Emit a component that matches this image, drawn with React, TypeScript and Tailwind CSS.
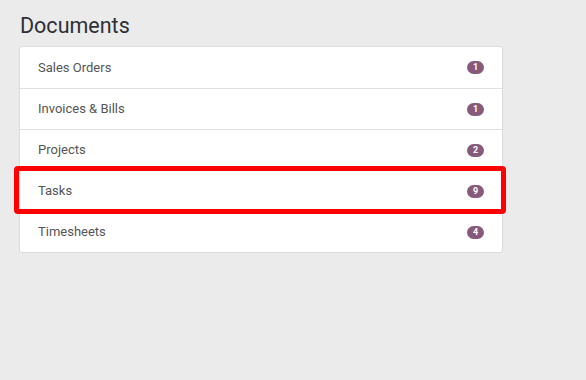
const docs = [
  { name: 'Sales Orders', count: 1 },
  { name: 'Invoices & Bills', count: 1 },
  { name: 'Projects', count: 2 },
  { name: 'Tasks', count: 9, highlight: true },
  { name: 'Timesheets', count: 4 },
]

export default function App() {
  return (
    <div className="w-[586px] h-[380px] bg-[#ebebeb] font-['Roboto',sans-serif] pt-[11px] pl-[19px]">
      <h1 className="text-[21.5px] leading-[29px] text-[#2e3035] pl-[1px] mb-[6px]">Documents</h1>
      <div className="w-[484px] bg-white border border-[#dcdcdc] rounded-[3px]">
        {docs.map((d, i) => (
          <div
            key={d.name}
            className={`relative h-[41px] flex items-center justify-between pl-[18px] pr-[18px] ${
              i > 0 ? 'border-t border-[#e0e0e0]' : ''
            }`}
          >
            <span className="text-[13px] text-[#555555]">{d.name}</span>
            <span className="w-[17px] h-[13px] rounded-full bg-[#875a7b] text-white text-[9px] font-bold leading-[13px] text-center">
              {d.count}
            </span>
            {/* highlight overlay */}
            {d.highlight && (
              <div className="absolute z-10 left-[-6px] right-[-4px] top-[-5px] bottom-[-3px] border-[5px] border-[#ff0000] rounded-[4px]" />
            )}
          </div>
        ))}
      </div>
    </div>
  )
}
